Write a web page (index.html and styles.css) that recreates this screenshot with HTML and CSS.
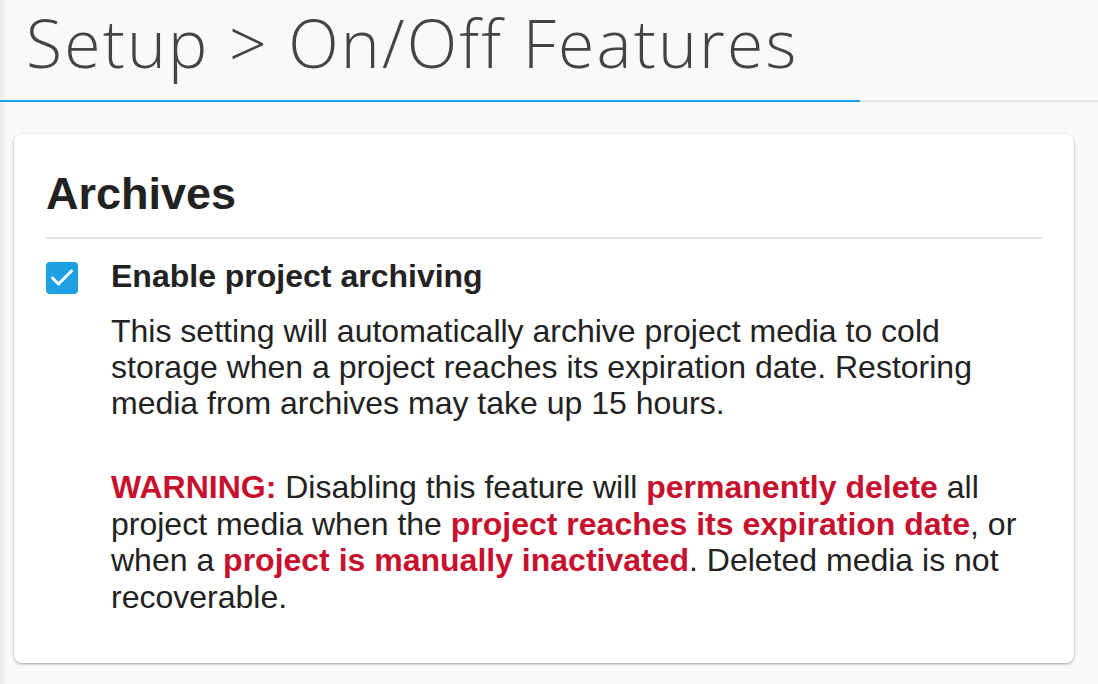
FILE: index.html
```html
<!DOCTYPE html>
<html>
<head>
    <title>Setup - On/Off Features</title>
    <link rel="stylesheet" href="styles.css">
</head>
<body>
    <div class="page">
        <div class="page-header">
            <h1 class="page-title">Setup &gt; On/Off Features</h1>
            <div class="title-rule"><span class="title-rule-active"></span></div>
        </div>

        <div class="card">
            <h2 class="card-title">Archives</h2>
            <hr class="card-rule">

            <div class="option">
                <label class="check" for="archiving">
                    <input type="checkbox" id="archiving" checked>
                    <span class="check-box">
                        <svg width="32" height="32" viewBox="0 0 32 32">
                            <path d="M6.5 16 L12.5 22 L25.5 9" fill="none" stroke="#fff" stroke-width="3" stroke-linecap="round" stroke-linejoin="round"/>
                        </svg>
                    </span>
                </label>
                <div class="option-body">
                    <label class="option-label" for="archiving">Enable project archiving</label>
                    <p class="option-text">
                        This setting will automatically archive project media to cold storage when a project reaches its expiration date. Restoring media from archives may take up 15 hours.
                    </p>
                    <p class="option-text warning">
                        <strong class="red">WARNING:</strong> Disabling this feature will <strong class="red">permanently delete</strong> all project media when the <strong class="red">project reaches its expiration date</strong>, or when a <strong class="red">project is manually inactivated</strong>. Deleted media is not recoverable.
                    </p>
                </div>
            </div>
        </div>
    </div>
</body>
</html>
```

FILE: styles.css
```css
body {
    margin: 0;
    background-color: #f9f9f9;
    color: #222;
    font-family: "Liberation Sans", Arial, sans-serif;
}

.page {
    min-height: 100vh;
    box-shadow: inset 7px 0 6px -4px rgba(0, 0, 0, 0.07);
    padding: 0 24px 0 14px;
}

.page-header {
    margin: 0 -24px 0 -14px;
}

.page-title {
    margin: 0;
    padding: 0 0 0 26px;
    height: 100px;
    box-sizing: border-box;
    font-family: "Open Sans", sans-serif;
    font-weight: 300;
    font-size: 66px;
    letter-spacing: 2.2px;
    line-height: 84px;
    color: #444;
}

.title-rule {
    height: 2px;
    background-color: #e4e4e4;
}

.title-rule-active {
    display: block;
    width: 860px;
    height: 2px;
    background-color: #1ea1e3;
}

.card {
    margin-top: 32px;
    background-color: #fff;
    border-radius: 8px;
    box-shadow: 0 1px 3px rgba(0, 0, 0, 0.35);
    padding: 34px 32px 47px 32px;
}

.card-title {
    margin: 0;
    font-size: 45px;
    line-height: 52px;
    font-weight: bold;
    color: #222;
}

.card-rule {
    margin: 17px 0 0 0;
    border: none;
    height: 2px;
    background-color: #e2e2e2;
}

.option {
    display: flex;
    align-items: flex-start;
    margin-top: 19px;
}

.check input {
    display: none;
}

.check-box {
    display: block;
    width: 32px;
    height: 32px;
    margin-top: 4px;
    margin-right: 33px;
    border-radius: 4px;
    background-color: #1ea1e3;
}

.check-box svg {
    display: block;
}

.option-body {
    flex: 1;
}

.option-label {
    display: block;
    font-size: 32px;
    line-height: 36px;
    font-weight: bold;
}

.option-text {
    margin: 19px 0 0 0;
    font-size: 32px;
    line-height: 36px;
}

.warning {
    margin-top: 48px;
    line-height: 36.7px;
}

.red {
    color: #c8102e;
}
```
